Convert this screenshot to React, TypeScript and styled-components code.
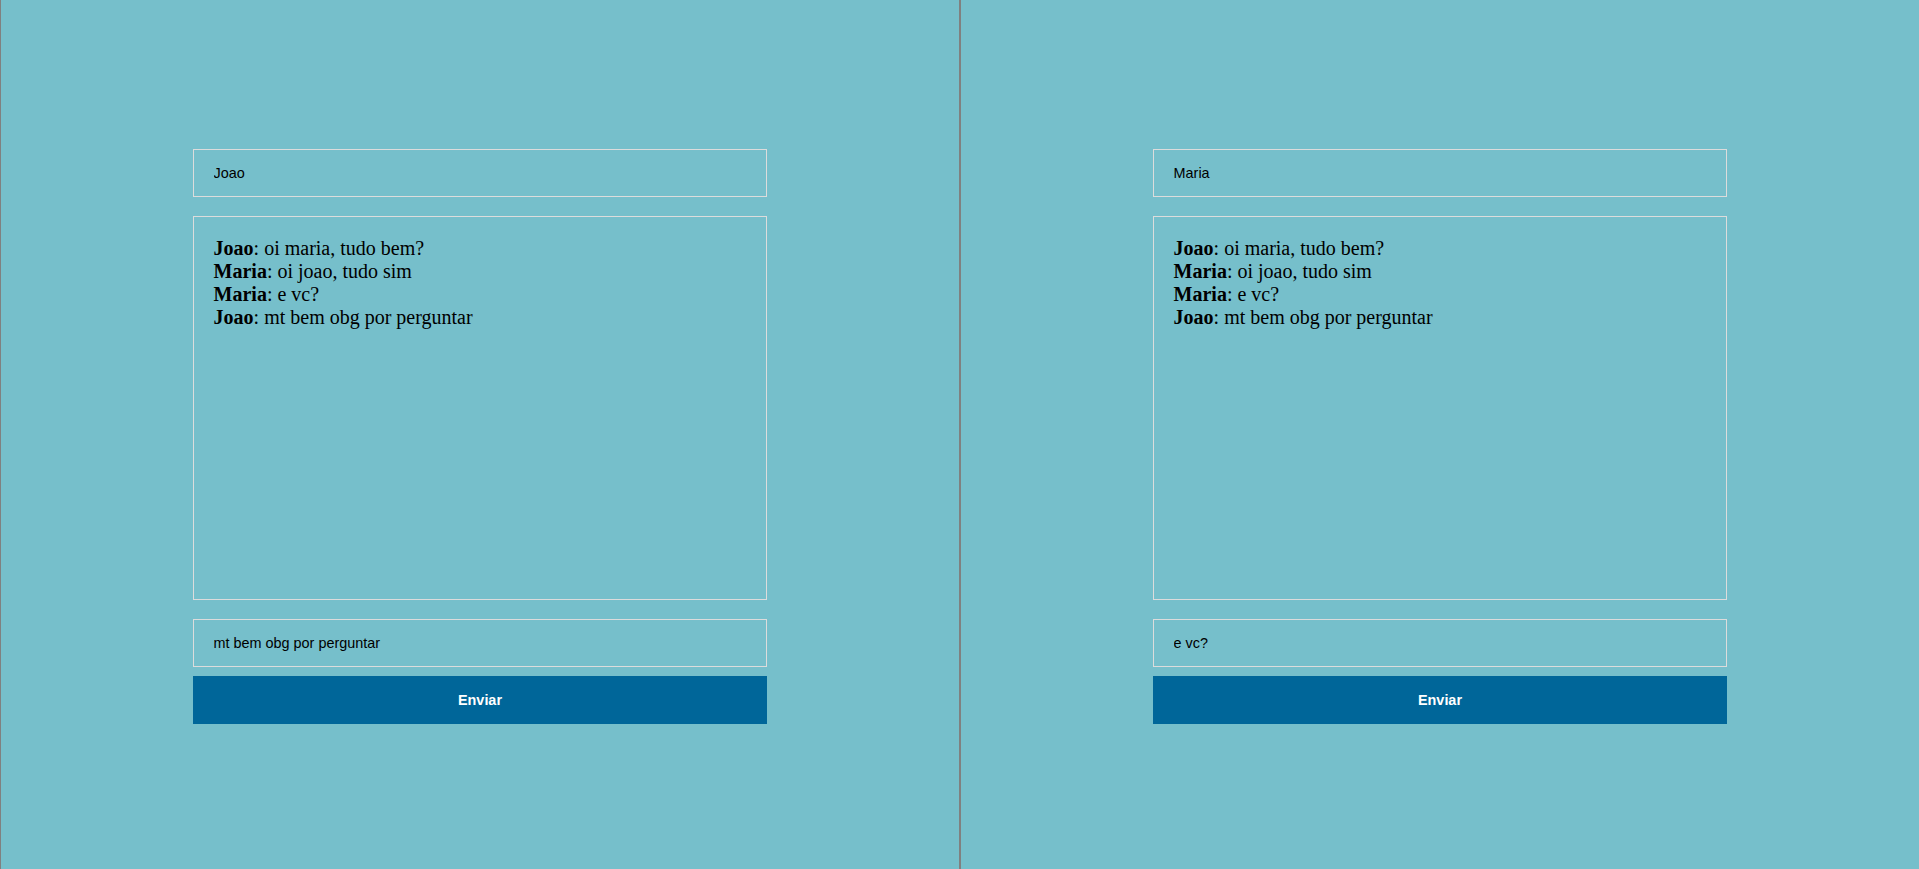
import * as React from 'react'
import styled, { createGlobalStyle } from 'styled-components'

const GlobalStyle = createGlobalStyle`
html, body {
  margin: 0;
  padding: 0;
  overflow: hidden;
  background: #76bfcb;
}
`;

const Page = styled.div`
display: flex;
width: 1920px;
height: 869px;
`;

const Pane = styled.div`
box-sizing: border-box;
flex: none;
width: 960px;
height: 100%;
border-left: 1px solid #808080;
border-right: 1px solid #808080;
background: #76bfcb;
display: flex;
flex-direction: column;
align-items: center;
padding-top: 149px;
`;

const Form = styled.div`
width: 60%;
display: flex;
flex-direction: column;
`;

const TextBox = styled.input`
box-sizing: border-box;
width: 100%;
height: 48px;
padding: 0 20px;
border: 1px solid #dcdcdc;
background: transparent;
font-family: "Liberation Sans", Arial, sans-serif;
font-size: 14.4px;
color: #000;
outline: none;
`;

const Messages = styled.div`
box-sizing: border-box;
width: 100%;
height: 384px;
margin: 19px 0 19px;
padding: 20px;
border: 1px solid #dcdcdc;
font-family: "Liberation Serif", "Times New Roman", serif;
font-size: 20px;
color: #000;
`;

const Line = styled.div`
line-height: normal;
`;

const Author = styled.b`
font-weight: bold;
`;

const SendButton = styled.button`
box-sizing: border-box;
width: 100%;
height: 48px;
margin-top: 9px;
border: none;
background: #006699;
color: #fff;
font-family: "Liberation Sans", Arial, sans-serif;
font-size: 14.4px;
font-weight: bold;
cursor: pointer;
`;

interface IMessage {
  author: string,
  text: string
}

const messages: IMessage[] = [
  { author: 'Joao', text: 'oi maria, tudo bem?' },
  { author: 'Maria', text: 'oi joao, tudo sim' },
  { author: 'Maria', text: 'e vc?' },
  { author: 'Joao', text: 'mt bem obg por perguntar' },
]

interface IChatProps {
  user: string,
  draft: string
}

const Chat = (props: IChatProps) => {
  const [name, setName] = React.useState(props.user)
  const [draft, setDraft] = React.useState(props.draft)
  return (
    <Pane>
      <Form>
        <TextBox value={name} onChange={e => setName(e.target.value)} />
        <Messages>
          {messages.map((m, i) => (
            <Line key={i}>
              <Author>{m.author}</Author>: {m.text}
            </Line>
          ))}
        </Messages>
        <TextBox value={draft} onChange={e => setDraft(e.target.value)} />
        <SendButton>Enviar</SendButton>
      </Form>
    </Pane>
  )
}

export default function App() {
  return (
    <>
      <GlobalStyle />
      <Page>
        <Chat user="Joao" draft="mt bem obg por perguntar" />
        <Chat user="Maria" draft="e vc?" />
      </Page>
    </>
  )
}
